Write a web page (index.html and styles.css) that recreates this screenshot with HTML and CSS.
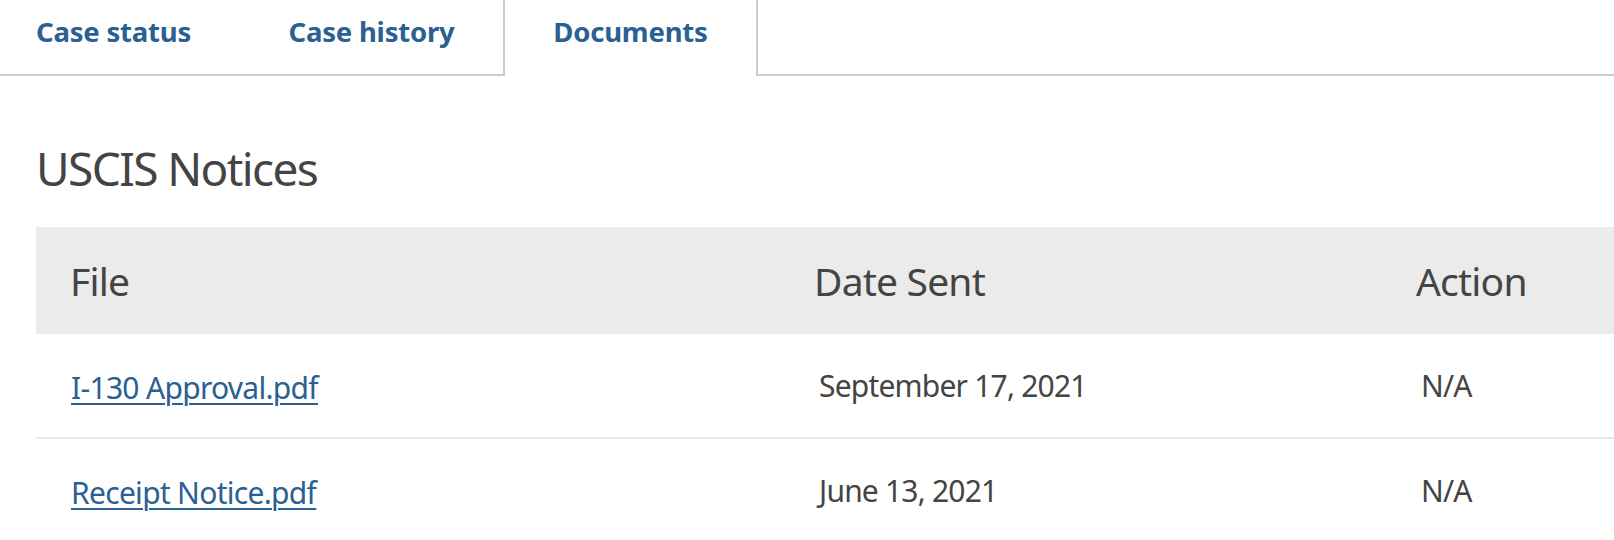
FILE: index.html
```html
<!DOCTYPE html>
<html lang="en">
<head>
<meta charset="utf-8">
<title>Documents</title>
<link rel="stylesheet" href="styles.css">
</head>
<body>
<nav class="tabs">
  <a class="tab tab-first" href="#">Case status</a>
  <a class="tab tab-second" href="#">Case history</a>
  <a class="tab tab-active" href="#">Documents</a>
</nav>
<main class="content">
  <h2 class="section-title">USCIS Notices</h2>
  <div class="table">
    <div class="row row-head">
      <div class="cell">File</div>
      <div class="cell">Date Sent</div>
      <div class="cell">Action</div>
    </div>
    <div class="row row-body">
      <div class="cell cell-link"><a href="#">I-130 Approval.pdf</a></div>
      <div class="cell">September 17, 2021</div>
      <div class="cell">N/A</div>
    </div>
    <div class="row row-body">
      <div class="cell cell-link"><a href="#">Receipt Notice.pdf</a></div>
      <div class="cell">June 13, 2021</div>
      <div class="cell">N/A</div>
    </div>
  </div>
</main>
</body>
</html>
```
FILE: styles.css
```css
html, body {
  margin: 0;
  padding: 0;
  background: #ffffff;
}

body {
  font-family: "Noto Sans", "Open Sans", sans-serif;
  color: #444444;
  overflow: hidden;
}

.tabs {
  display: flex;
  height: 74px;
  border-bottom: 2px solid #cccccc;
}

.tab {
  display: flex;
  align-items: center;
  justify-content: center;
  box-sizing: border-box;
  height: 74px;
  padding-bottom: 12px;
  font-size: 27.5px;
  font-weight: 700;
  letter-spacing: -0.2px;
  color: #2a6092;
  text-decoration: none;
}

.tab-first {
  width: 240px;
  justify-content: flex-start;
  padding-left: 36px;
}

.tab-second {
  width: 263px;
}

.tab-active {
  width: 255px;
  height: 76px;
  margin-bottom: -2px;
  padding-bottom: 14px;
  background: #ffffff;
  border-left: 2px solid #cccccc;
  border-right: 2px solid #cccccc;
}

.content {
  padding-left: 36px;
}

.section-title {
  margin: 64px 0 30px;
  font-size: 46px;
  font-weight: 400;
  letter-spacing: -1.6px;
  line-height: 57px;
  color: #444444;
}

.table {
  display: flex;
  flex-direction: column;
}

.row {
  display: grid;
  grid-template-columns: 744px 602px 1fr;
}

.row-head {
  height: 107px;
  background: #ebebeb;
  font-size: 39px;
  letter-spacing: -0.8px;
}

.row-body {
  height: 103px;
  font-size: 30px;
  letter-spacing: -0.8px;
  border-bottom: 2px solid #e8e8e8;
}

.cell {
  display: flex;
  align-items: center;
  padding-left: 34px;
}

.row-body .cell {
  padding-left: 39px;
}

.row-body .cell-link {
  padding-top: 3px;
  padding-left: 35px;
  letter-spacing: -0.7px;
}

.cell-link a {
  color: #2a6092;
  text-decoration: underline;
  text-decoration-thickness: 2px;
  text-underline-offset: 4px;
}
```
